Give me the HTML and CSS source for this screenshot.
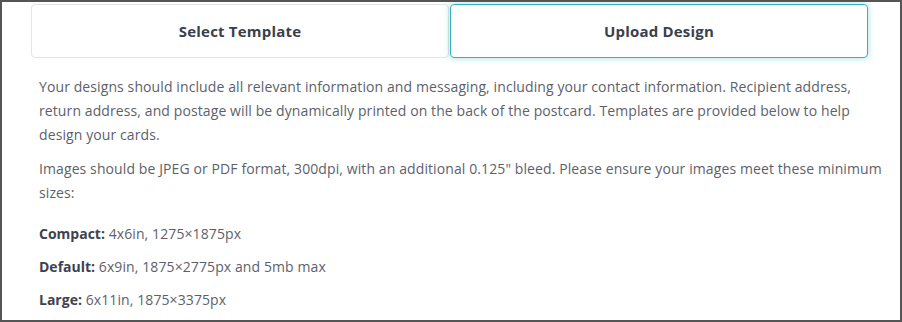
FILE: index.html
```html
<!DOCTYPE html>
<html>
<head>
<meta charset="utf-8">
<link rel="stylesheet" href="styles.css">
</head>
<body>
<div class="frame">
  <div class="tabs">
    <div class="tab">Select Template</div>
    <div class="tab active">Upload Design</div>
  </div>
  <div class="content">
    <p>Your designs should include all relevant information and messaging, including your contact information. Recipient address, return address, and postage will be dynamically printed on the back of the postcard. Templates are provided below to help design your cards.</p>
    <p class="sizes-intro">Images should be JPEG or PDF format, 300dpi, with an additional 0.125" bleed. Please ensure your images meet these minimum sizes:</p>
    <p class="size"><b>Compact:</b> 4x6in, 1275×1875px</p>
    <p class="size"><b>Default:</b> 6x9in, 1875×2775px and 5mb max</p>
    <p class="size"><b>Large:</b> 6x11in, 1875×3375px</p>
  </div>
</div>
</body>
</html>
```
FILE: styles.css
```css
html, body {
  margin: 0;
  padding: 0;
  background: #fff;
}
.frame {
  box-sizing: border-box;
  width: 902px;
  height: 322px;
  border: 2px solid #555;
  padding: 2px 32px 0 29px;
  overflow: hidden;
  font-family: "Open Sans", "Lato", sans-serif;
}
.tabs {
  display: grid;
  grid-template-columns: 1fr 1fr;
  gap: 1px;
}
.tab {
  box-sizing: border-box;
  height: 54px;
  display: flex;
  align-items: center;
  justify-content: center;
  border: 1px solid #e3e4e6;
  border-radius: 4px;
  font-size: 15px;
  font-weight: 700;
  letter-spacing: 0.2px;
  color: #3b3f4d;
}
.tab.active {
  border-color: #33b3bd;
  box-shadow: 0 0 6px rgba(51, 179, 189, 0.45);
}
.content {
  padding: 17px 0 0 8px;
  margin-right: -18px;
  font-size: 14px;
  line-height: 24px;
  letter-spacing: 0.1px;
  color: #5d5f6b;
}
.content p {
  margin: 0 0 10px;
}
.content p.sizes-intro {
  margin-bottom: 17px;
}
.content p.size {
  line-height: 23px;
}
.content b {
  color: #3e4250;
  font-weight: 700;
  letter-spacing: 0;
}
```
